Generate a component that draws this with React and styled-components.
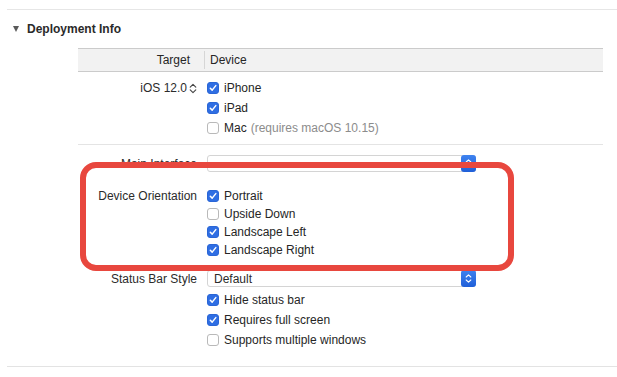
import React from 'react';
import styled, { createGlobalStyle } from 'styled-components';

const GlobalStyle = createGlobalStyle`
  html, body {
    margin: 0;
    padding: 0;
    background: #ffffff;
  }
  body {
    font-family: 'Liberation Sans', Arial, Helvetica, sans-serif;
    font-size: 12px;
    color: #262626;
  }
`;

const Page = styled.div`
  position: relative;
  width: 617px;
  height: 377px;
  overflow: hidden;
  padding-top: 9px;
  box-sizing: border-box;
`;

const Section = styled.section`
  margin-left: 7px;
  border-top: 1px solid #e6e6e6;
  border-bottom: 1px solid #e3e3e3;
  height: 358px;
  box-sizing: border-box;
`;

const SectionHeader = styled.div`
  display: flex;
  align-items: center;
  height: 38px;
  padding-left: 6px;
  gap: 8px;
`;

const Disclosure = styled.span`
  width: 0;
  height: 0;
  border-left: 3.5px solid transparent;
  border-right: 3.5px solid transparent;
  border-top: 6px solid #5a5a5a;
`;

const SectionTitle = styled.h2`
  margin: 0;
  font-size: 12px;
  font-weight: 700;
  color: #2a2a2a;
`;

const Table = styled.div`
  margin-left: 71px;
  width: 525px;
`;

const HeaderBar = styled.div`
  display: grid;
  grid-template-columns: 127px 1fr;
  height: 24px;
  box-sizing: border-box;
  background: #f2f2f2;
  border-top: 1px solid #cbcbcb;
  border-bottom: 1px solid #cbcbcb;
`;

const HeaderCell = styled.div`
  display: flex;
  align-items: center;
  justify-content: ${p => (p.right ? 'flex-end' : 'flex-start')};
  padding: ${p => (p.right ? '0 14px 0 0' : '0 0 0 5px')};
  border-right: ${p => (p.right ? '1px solid #d6d6d6' : 'none')};
  margin: 2px 0;
  color: #262626;
`;

const Group = styled.div`
  padding-top: ${p => p.top || 0}px;
`;

const Row = styled.div`
  display: grid;
  grid-template-columns: 127px 1fr;
  align-items: center;
  height: ${p => p.h || 20}px;
`;

const Label = styled.div`
  padding-right: 8px;
  color: #2b2b2b;
  display: flex;
  justify-content: flex-end;
  align-items: center;
  gap: 2px;
  white-space: nowrap;
`;

const Value = styled.div`
  display: flex;
  align-items: center;
  padding-left: 2px;
  gap: 5px;
  white-space: nowrap;
`;

const Box = styled.span`
  display: inline-flex;
  align-items: center;
  justify-content: center;
  width: 12px;
  height: 12px;
  box-sizing: border-box;
  border-radius: 3px;
  background: ${p => (p.checked ? '#2f6ee3' : '#ffffff')};
  border: 1px solid ${p => (p.checked ? '#2a66d6' : '#b9b9b9')};
`;

const Hint = styled.span`
  color: #8c8c8c;
  margin-left: -1px;
`;

const Divider = styled.div`
  height: 1px;
  background: #e4e4e4;
  margin-top: 6px;
`;

const Popup = styled.div`
  display: flex;
  align-items: center;
  width: 269px;
  height: 17px;
  box-sizing: border-box;
  border: 1px solid #d4d4d4;
  border-radius: 3px;
  background: #ffffff;
  position: relative;
  padding-left: 6px;
  color: #2b2b2b;
`;

const PopupButton = styled.span`
  position: absolute;
  right: -1px;
  top: -1px;
  width: 15px;
  height: 17px;
  border-radius: 3px;
  background: linear-gradient(#3f83f0, #1f5fd8);
  display: flex;
  align-items: center;
  justify-content: center;
`;

const Overlay = styled.div`
  position: absolute;
  left: 80px;
  top: 162px;
  width: 434px;
  height: 109px;
  box-sizing: border-box;
  border: 6px solid #e8473e;
  border-radius: 16px;
  pointer-events: none;
`;

const Check = ({ checked }) => (
  <Box checked={checked}>
    {checked && (
      <svg width="8" height="8" viewBox="0 0 8 8">
        <path d="M1.3 4.2 L3.2 6.1 L6.8 1.6" fill="none" stroke="#fff" strokeWidth="1.5" strokeLinecap="round" strokeLinejoin="round" />
      </svg>
    )}
  </Box>
);

const Stepper = () => (
  <svg width="8" height="11" viewBox="0 0 8 11">
    <path d="M1.2 4.2 L4 1.4 L6.8 4.2 M1.2 6.8 L4 9.6 L6.8 6.8" fill="none" stroke="#444" strokeWidth="1.1" strokeLinecap="round" strokeLinejoin="round" />
  </svg>
);

const Option = ({ checked, children, hint }) => (
  <Value>
    <Check checked={checked} />
    <span>{children}</span>
    {hint && <Hint>{hint}</Hint>}
  </Value>
);

const Chevrons = () => (
  <svg width="7" height="11" viewBox="0 0 7 11">
    <path d="M1.2 4 L3.5 1.8 L5.8 4 M1.2 7 L3.5 9.2 L5.8 7" fill="none" stroke="#fff" strokeWidth="1.1" strokeLinecap="round" strokeLinejoin="round" />
  </svg>
);

const App = () => (
  <Page>
    <GlobalStyle />
    <Section>
      <SectionHeader>
        <Disclosure />
        <SectionTitle>Deployment Info</SectionTitle>
      </SectionHeader>
      <Table>
        <HeaderBar>
          <HeaderCell right>Target</HeaderCell>
          <HeaderCell>Device</HeaderCell>
        </HeaderBar>

        <Group top={6}>
          <Row>
            <Label>
              iOS 12.0
              <Stepper />
            </Label>
            <Option checked>iPhone</Option>
          </Row>
          <Row>
            <div />
            <Option checked>iPad</Option>
          </Row>
          <Row>
            <div />
            <Option hint="(requires macOS 10.15)">Mac</Option>
          </Row>
        </Group>

        <Divider />

        <Group top={10}>
          <Row h={17}>
            <Label>Main Interface</Label>
            <Value>
              <Popup>
                <PopupButton>
                  <Chevrons />
                </PopupButton>
              </Popup>
            </Value>
          </Row>
        </Group>

        <Group top={15}>
          <Row h={18}>
            <Label>Device Orientation</Label>
            <Option checked>Portrait</Option>
          </Row>
          <Row h={18}>
            <div />
            <Option>Upside Down</Option>
          </Row>
          <Row h={18}>
            <div />
            <Option checked>Landscape Left</Option>
          </Row>
          <Row h={18}>
            <div />
            <Option checked>Landscape Right</Option>
          </Row>
        </Group>

        <Group top={11}>
          <Row h={17}>
            <Label>Status Bar Style</Label>
            <Value>
              <Popup>
                Default
                <PopupButton>
                  <Chevrons />
                </PopupButton>
              </Popup>
            </Value>
          </Row>
        </Group>

        <Group top={3}>
          <Row>
            <div />
            <Option checked>Hide status bar</Option>
          </Row>
          <Row>
            <div />
            <Option checked>Requires full screen</Option>
          </Row>
          <Row>
            <div />
            <Option>Supports multiple windows</Option>
          </Row>
        </Group>
      </Table>
    </Section>
    <Overlay />
  </Page>
);

export default App;
